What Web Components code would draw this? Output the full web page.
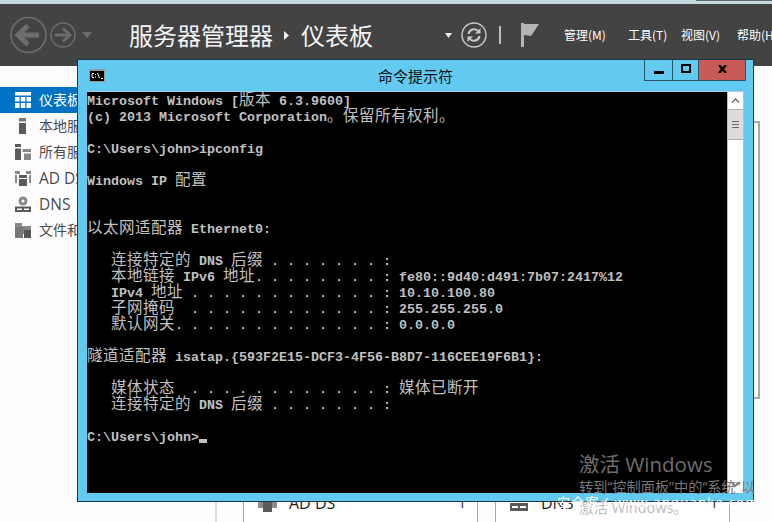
<!DOCTYPE html>
<html lang="zh">
<head>
<meta charset="utf-8">
<title>服务器管理器</title>
<style>
  html, body { margin: 0; padding: 0; }
  body { width: 772px; height: 522px; overflow: hidden; background: #fffcff; font-family: "Noto Sans CJK SC", sans-serif; }
</style>
</head>
<body>
<sm-app>
  <sm-header slot="header"></sm-header>
  <sm-sidebar slot="side">
    <sm-nav-item icon="dash" active>仪表板</sm-nav-item>
    <sm-nav-item icon="local">本地服务器</sm-nav-item>
    <sm-nav-item icon="all">所有服务器</sm-nav-item>
    <sm-nav-item icon="adds" style="font-size:15.5px">AD DS</sm-nav-item>
    <sm-nav-item icon="dns" style="font-size:15.5px">DNS</sm-nav-item>
    <sm-nav-item icon="file">文件和存储服务</sm-nav-item>
  </sm-sidebar>
  <sm-tiles slot="main"></sm-tiles>
</sm-app>
<cmd-window>
<con-line>Microsoft Windows [版本 6.3.9600]</con-line>
<con-line>(c) 2013 Microsoft Corporation。保留所有权利。</con-line>
<con-line></con-line>
<con-line>C:\Users\john>ipconfig</con-line>
<con-line></con-line>
<con-line>Windows IP 配置</con-line>
<con-line></con-line>
<con-line></con-line>
<con-line>以太网适配器 Ethernet0:</con-line>
<con-line></con-line>
<con-line>   连接特定的 DNS 后缀 . . . . . . . :</con-line>
<con-line>   本地链接 IPv6 地址. . . . . . . . : fe80::9d40:d491:7b07:2417%12</con-line>
<con-line>   IPv4 地址 . . . . . . . . . . . . : 10.10.100.80</con-line>
<con-line>   子网掩码  . . . . . . . . . . . . : 255.255.255.0</con-line>
<con-line>   默认网关. . . . . . . . . . . . . : 0.0.0.0</con-line>
<con-line></con-line>
<con-line>隧道适配器 isatap.{593F2E15-DCF3-4F56-B8D7-116CEE19F6B1}:</con-line>
<con-line></con-line>
<con-line>   媒体状态  . . . . . . . . . . . . : 媒体已断开</con-line>
<con-line>   连接特定的 DNS 后缀 . . . . . . . :</con-line>
<con-line></con-line>
<con-line cursor>C:\Users\john></con-line>
</cmd-window>
<win-watermark></win-watermark>

<script>
const CJK_STACK = '"Noto Sans CJK SC", sans-serif';

// outer page: grey strip, dark header, then sidebar + tile area
class SmApp extends HTMLElement {
  constructor() {
    super();
    this.attachShadow({ mode: 'open' });
    this.shadowRoot.innerHTML = `
      <style>
        :host { display: flex; flex-direction: column; width: 772px; height: 522px; }
        .strip { height: 4px; flex: none; background: linear-gradient(#666, #666) no-repeat right top / 76px 1px, #c6d9e0; }
        .body { flex: 1; display: flex; min-height: 0; }
      </style>
      <div class="strip"></div>
      <slot name="header"></slot>
      <div class="body">
        <slot name="side"></slot>
        <slot name="main"></slot>
      </div>`;
  }
}

class SmHeader extends HTMLElement {
  constructor() {
    super();
    this.attachShadow({ mode: 'open' });
    this.shadowRoot.innerHTML = `
      <style>
        :host { display: flex; align-items: center; height: 62px; flex: none; background: #434343; color: #fff; padding-left: 10px; box-sizing: border-box; overflow: hidden; }
        svg { display: block; flex: none; }
        .fwd { margin-left: 3px; }
        .drop { margin-left: 6px; }
        .title { font: 24px/32px ${CJK_STACK}; margin-left: 37px; white-space: nowrap; width: 144px; flex: none; color: #f4f4f4; }
        .sep { margin-left: 11px; }
        .crumb { font: 24px/32px ${CJK_STACK}; margin-left: 12px; width: 72px; flex: none; white-space: nowrap; color: #f4f4f4; }
        .drop2 { margin-left: 72px; }
        .refresh { margin-left: 9px; }
        .bar { width: 2px; height: 18px; background: #bdbdbd; margin-left: 12px; flex: none; }
        .flag { margin-left: 20px; }
        .menu { display: flex; margin-left: 25px; font: 12px/16px ${CJK_STACK}; white-space: nowrap; color: #fff; flex: none; }
        .menu span { display: block; }
      </style>
      <svg class="back" width="37" height="38" viewBox="0 0 37 38" fill="none" stroke="#6d6d6d">
        <circle cx="18.5" cy="19" r="17.5" stroke-width="1.6"/>
        <path d="M7 19H29M18 9.5L8 19L18 28.5" stroke-width="5"/>
      </svg>
      <svg class="fwd" width="26" height="26" viewBox="0 0 26 26" fill="none" stroke="#6d6d6d">
        <circle cx="13" cy="13" r="12" stroke-width="1.4"/>
        <path d="M5 13H20M13 6.5L20 13L13 19.5" stroke-width="3"/>
      </svg>
      <svg class="drop" width="10" height="6" viewBox="0 0 10 6"><path d="M0 0H10L5 6Z" fill="#6d6d6d"/></svg>
      <div class="title">服务器管理器</div>
      <svg class="sep" width="5" height="9" viewBox="0 0 5 9"><path d="M0 0L5 4.5L0 9Z" fill="#f0f0f0"/></svg>
      <div class="crumb">仪表板</div>
      <svg class="drop2" width="7" height="5" viewBox="0 0 7 5"><path d="M0 0H7L3.5 5Z" fill="#e8e8e8"/></svg>
      <svg class="refresh" width="26" height="26" viewBox="0 0 26 26" fill="none" stroke="#c9c9c9">
        <circle cx="13" cy="13" r="12" stroke-width="1.4"/>
        <path d="M7.5 12A5.6 5.6 0 0 1 17.5 9.5M18.5 14A5.6 5.6 0 0 1 8.5 16.5" stroke-width="2"/>
        <path d="M19.5 6V11.5H14ZM6.5 20V14.5H12Z" fill="#c9c9c9" stroke="none"/>
      </svg>
      <div class="bar"></div>
      <svg class="flag" width="18" height="24" viewBox="0 0 18 24"><rect x="0" width="3" height="24" fill="#b5b5b5"/><path d="M3 1H18L10 13L3 12Z" fill="#b5b5b5"/></svg>
      <div class="menu">
        <span style="width:64px">管理(M)</span>
        <span style="width:53px">工具(T)</span>
        <span style="width:56px">视图(V)</span>
        <span>帮助(H)</span>
      </div>`;
  }
}

class SmSidebar extends HTMLElement {
  constructor() {
    super();
    this.attachShadow({ mode: 'open' });
    this.shadowRoot.innerHTML = `
      <style>
        :host { display: block; width: 217px; flex: none; padding-top: 21px; box-sizing: border-box; border-right: 2px solid #dcdcdc; background: #fffcff; }
      </style>
      <slot></slot>`;
  }
}

const NAV_ICONS = {
  dash: '<path d="M0 0H16V3.5H0Z"/><path d="M0 5H4.5V9.5H0ZM5.8 5H10.3V9.5H5.8ZM11.5 5H16V9.5H11.5ZM0 11H4.5V16H0ZM5.8 11H10.3V16H5.8ZM11.5 11H16V16H11.5Z"/>',
  local: '<path fill="#777" d="M4 0H11V3.5H4Z"/><path d="M4 5H11V16H4Z"/>',
  all: '<path d="M0 0H6V3H0ZM0 4.5H6V16H0Z"/><path fill="#888" d="M7.5 5H16V8H7.5ZM9 9.5H16V16H9Z"/>',
  adds: '<path fill="#888" d="M0 1H5V4H0ZM11 1H16V4H11ZM0 5H2V13H0ZM14 5H16V13H14Z"/><path d="M4 5H12V8H4ZM4 9H12V16H4Z"/>',
  dns: '<circle cx="8" cy="5" r="4.5" fill="#888"/><circle cx="8" cy="5" r="1.5" fill="#fff"/><path d="M0 10.5H16V16H0Z"/><path fill="#fff" d="M2 12.5H7V14H2ZM9 12.5H14V14H9Z"/>',
  file: '<path fill="#888" d="M0 1H7V4H16V12H0Z"/><path d="M0 5H8V16H0Z" fill="#777"/><path d="M9 8H16V16H9Z" fill="#555"/>',
};

class SmNavItem extends HTMLElement {
  constructor() {
    super();
    this.attachShadow({ mode: 'open' });
  }
  connectedCallback() {
    this.shadowRoot.innerHTML = `
      <style>
        :host { display: flex; align-items: center; height: 26px; padding-left: 15px; gap: 8px; overflow: hidden; white-space: nowrap;
                font: 14px/26px "Open Sans", ${CJK_STACK}; color: #4a4a4a; }
        :host([active]) { background: #0072c6; color: #fff; }
        svg { flex: none; fill: #5a5a5a; }
        :host([active]) svg { fill: #fff; }
      </style>
      <svg width="16" height="16" viewBox="0 0 16 16">${NAV_ICONS[this.getAttribute('icon')] || ''}</svg>
      <slot></slot>`;
  }
}

// dashboard tiles, only their lower rows peek out under the window
class SmTiles extends HTMLElement {
  constructor() {
    super();
    this.attachShadow({ mode: 'open' });
    this.shadowRoot.innerHTML = `
      <style>
        :host { display: flex; flex: 1; min-width: 0; padding-left: 26px; align-items: flex-end; }
        .tile { box-sizing: border-box; height: 60px; width: 235px; border: solid #a8a8a8; border-width: 0 1px; background: #fff; display: flex; align-items: flex-end; flex: none; }
        .tile + .tile { margin-left: 17px; }
        .row { display: flex; align-items: center; height: 18px; margin-bottom: 10px; width: 100%; font: 16px/18px "Open Sans", sans-serif; color: #1c1c1c; }
        .ic { margin-left: 14px; flex: none; fill: #5a5a5a; }
        .name { margin-left: 13px; flex: 1; }
        .n { margin-right: 11px; font-size: 14px; }
        .peek { box-sizing: border-box; flex: none; align-self: flex-start; margin: 55px 0 0 24px; width: 6px; height: 278px; background: #fff; border: solid #a8a8a8; border-width: 2px 2px 2px 0; }
      </style>
      <div class="tile"><div class="row">
        <svg class="ic" width="19" height="18" viewBox="0 0 19 18"><path fill="#8a8a8a" d="M0 3H5V14H0ZM14 3H19V14H14Z"/><path d="M5 3H14V18H5Z"/></svg>
        <span class="name" style="margin-left:12px">AD DS</span><span class="n">1</span>
      </div></div>
      <div class="tile"><div class="row">
        <svg class="ic" width="18" height="18" viewBox="0 0 18 18"><path fill="#8a8a8a" d="M6 6H12V8H6Z"/><path d="M0 9H18V17H0Z"/><path fill="#fff" d="M2 12H8V14H2ZM10 12H16V14H10Z"/></svg>
        <span class="name">DNS</span><span class="n">1</span>
      </div></div>
      <div class="peek"></div>`;
  }
}

// the console window floats over the server manager, like on a desktop
class CmdWindow extends HTMLElement {
  constructor() {
    super();
    this.attachShadow({ mode: 'open' });
    this.shadowRoot.innerHTML = `
      <style>
        :host { position: absolute; left: 77px; top: 59px; width: 677px; height: 443px; box-sizing: border-box; border: 1px solid #1e3440; background: #62caf0; display: flex; flex-direction: column; }
        .bar { height: 31px; flex: none; display: grid; grid-template-columns: 1fr auto 1fr; align-items: start; }
        .ico { margin: 9px 0 0 11px; display: block; }
        .cap { font: 15px/31px ${CJK_STACK}; color: #111; }
        .btns { justify-self: end; display: flex; height: 21px; margin-right: 7px; border: 1px solid #2c5566; border-top: 0; box-sizing: border-box; }
        .btn { display: flex; align-items: center; justify-content: center; border-right: 1px solid #2c5566; }
        .btn:last-child { border-right: 0; background: #c75a55; }
        .wrap { margin: 0 9px; display: flex; height: 401px; border-top: 1px solid #a6cbd9; flex: none; }
        .con { flex: 1; min-width: 0; background: #000; overflow: hidden; padding-top: 2px; box-sizing: border-box; }
        .sb { width: 17px; flex: none; background: #fff; display: flex; flex-direction: column; box-sizing: border-box; border: 1px solid #bdbdbd; border-width: 0 1px; }
        .arrow { height: 17px; display: flex; align-items: center; justify-content: center; flex: none; }
        .thumb { height: 31px; background: #dcdcdc; border: 1px solid #b0b0b0; border-width: 1px 0; display: flex; align-items: center; justify-content: center; box-sizing: border-box; flex: none; }
        .track { flex: 1; }
      </style>
      <div class="bar">
        <svg class="ico" width="16" height="13" viewBox="0 0 16 13">
          <rect width="16" height="13" fill="#9a9a9a"/><rect x="1" y="2" width="14" height="10" fill="#000"/>
          <path d="M3 4H5V5H3ZM2.500 5H3.500V8H2.500ZM3 8H5V9H3ZM6 5H7V6H6ZM6 7.500H7V8.500H6ZM8 4H9L11 9H10ZM12 9H14V10H12Z" fill="#fff"/>
        </svg>
        <div class="cap">命令提示符</div>
        <div class="btns">
          <div class="btn" style="width:27px"><svg width="10" height="3" viewBox="0 0 10 3" style="margin-top:4px"><rect width="10" height="3" fill="#000"/></svg></div>
          <div class="btn" style="width:25px"><svg width="10" height="9" viewBox="0 0 10 9" fill="none" style="margin-top:-3px"><rect x="1" y="1" width="8" height="7" stroke="#000" stroke-width="2"/></svg></div>
          <div class="btn" style="width:46px"><svg width="9" height="8" viewBox="0 0 9 8" style="margin-top:-2px"><path d="M1 0L8 8M8 0L1 8" stroke="#000" stroke-width="2.400"/></svg></div>
        </div>
      </div>
      <div class="wrap">
        <div class="con"><slot></slot></div>
        <div class="sb">
          <div class="arrow"><svg width="9" height="5" viewBox="0 0 9 5" fill="none"><path d="M1 4.500L4.500 1L8 4.500" stroke="#666" stroke-width="1.300"/></svg></div>
          <div class="thumb"><svg width="7" height="7" viewBox="0 0 7 7"><path d="M0 0H7V1H0ZM0 3H7V4H0ZM0 6H7V7H0Z" fill="#666"/></svg></div>
          <div class="track"></div>
          <div class="arrow"><svg width="9" height="5" viewBox="0 0 9 5" fill="none"><path d="M1 .5L4.500 4L8 .5" stroke="#666" stroke-width="1.300"/></svg></div>
        </div>
      </div>`;
  }
}

// one console row: latin cells are 8px, CJK cells 16px, like the raster font
class ConLine extends HTMLElement {
  constructor() {
    super();
    this.attachShadow({ mode: 'open' });
  }
  connectedCallback() {
    const text = this.textContent.replace(/\n/g, '');
    const esc = s => s.replace(/&/g, '&amp;').replace(/</g, '&lt;').replace(/>/g, '&gt;');
    const parts = text.split(/([\u3000-\u9fff\uff00-\uffef]+)/);
    const html = parts.map((p, i) => i % 2 ? `<span class="c">${esc(p)}</span>` : esc(p)).join('');
    const cur = this.hasAttribute('cursor') ? '<i></i>' : '';
    // no whitespace around the content: the host is white-space: pre
    // line-height 0 on the CJK runs keeps every row on the same baseline
    this.shadowRoot.innerHTML = `<style>
        :host { display: block; height: 16px; white-space: pre; color: #c0c0c0; font: bold 13.333px/16px "Liberation Mono", monospace; }
        .c { font: 15.500px/0 ${CJK_STACK}; letter-spacing: .5px; }
        i { display: inline-block; width: 8px; height: 4px; background: #c0c0c0; vertical-align: -2px; }
      </style>${html}${cur}`;
  }
}

// the "activate windows" watermark and the site stamp drawn across the shot
class WinWatermark extends HTMLElement {
  constructor() {
    super();
    this.attachShadow({ mode: 'open' });
    this.shadowRoot.innerHTML = `
      <style>
        :host { position: absolute; left: 550px; top: 451px; width: 222px; height: 71px; pointer-events: none; overflow: hidden; white-space: nowrap; font-family: "Open Sans", ${CJK_STACK}; }
        div { position: absolute; }
        .a { left: 29px; top: 0; font-size: 20.500px; line-height: 26px; color: #6e6e6e; }
        .b { left: 29px; top: 26px; font-size: 14.200px; line-height: 20px; color: #777; }
        .c { left: 29px; top: 47px; font-size: 14.500px; line-height: 20px; color: #bbb; }
        .d { left: 7px; top: 41px; font-size: 13px; line-height: 20px; color: #fff; letter-spacing: 1.300px; }
      </style>
      <div class="a">激活 Windows</div>
      <div class="b">转到“控制面板”中的“系统”以</div>
      <div class="c">激活 Windows。</div>
      <div class="d">安全客 ( www.anquanke.com )</div>`;
  }
}

customElements.define('sm-app', SmApp);
customElements.define('sm-header', SmHeader);
customElements.define('sm-sidebar', SmSidebar);
customElements.define('sm-nav-item', SmNavItem);
customElements.define('sm-tiles', SmTiles);
customElements.define('cmd-window', CmdWindow);
customElements.define('con-line', ConLine);
customElements.define('win-watermark', WinWatermark);
</script>
</body>
</html>
